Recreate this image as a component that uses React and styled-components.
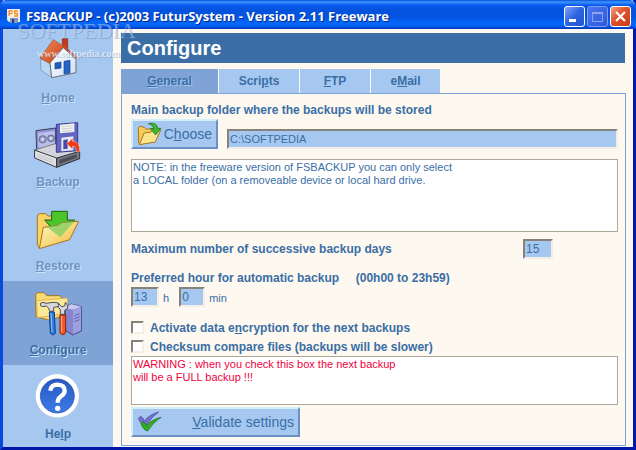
import { useState } from "react";
import styled, { createGlobalStyle } from "styled-components";

const ink = "#3a6ea5";
const light = "#a6c8f0";
const mid = "#7ea3d4";
const paper = "#fdf8f0";

const GlobalStyle = createGlobalStyle`
    * { box-sizing: border-box; }
    body {
        margin: 0;
        color: ${ink};
        font: 11px/13px "Liberation Sans", Arial, sans-serif;
    }
    input, button, textarea { font: inherit; color: inherit; }
`

let Window = styled.div`
    position: relative;
    display: flex;
    flex-direction: column;
    min-height: 100vh;
    border: solid;
    border-width: 0 3px 3px;
    border-color: #0a48e0 #0018b0 #0018a8 #0a48e0;
    background: ${paper};
`

let TitleBar = styled.header`
    display: flex;
    align-items: center;
    gap: 6px;
    height: 29px;
    margin: 0 -3px;
    padding: 3px 5px 0 7px;
    border-radius: 6px 6px 0 0;
    background: linear-gradient(#0a50d8 0, #3c95ff 2px, #0a5cf0 5px, #0452dc 10px, #0355e4 18px, #0468fc 23px, #0460f4 26px, #0138b8 29px);
`

let Title = styled.h1`
    flex: 1;
    margin: 0;
    color: white;
    font: bold 13px/14px "Open Sans", "Noto Sans", sans-serif;
    text-shadow: 1px 1px 0 #062a88;
    white-space: nowrap;
`

let Controls = styled.div`
    display: flex;
    gap: 2px;
`

let WinBtn = styled.button`
    display: block;
    width: 21px;
    height: 21px;
    padding: 0;
    border: 1px solid ${props => props.$dim ? '#7d9cf0' : 'white'};
    border-radius: 3px;
    background: ${props => props.$bg};

    svg { display: block; }
`

let Body = styled.div`
    flex: 1;
    display: flex;
`

let Sidebar = styled.nav`
    flex: none;
    width: 110px;
    background: ${light};
`

let NavBtn = styled.button`
    display: flex;
    flex-direction: column;
    align-items: center;
    width: 100%;
    height: ${props => props.$last ? '82px' : '84px'};
    padding: 8px 0 0;
    border: 0;
    background: ${props => props.$active ? mid : 'transparent'};
    color: ${props => props.$dim ? '#6e93c1' : ink};
    font-weight: bold;
    font-size: 12px;
    line-height: 26px;
    text-shadow: ${props => props.$dim || props.$active ? '1px 1px 0 #cfe3fb' : 'none'};

    svg { flex: none; }
`

let Main = styled.main`
    flex: 1;
    min-width: 0;
    display: flex;
    flex-direction: column;
    padding: 4px 7px 1px 8px;
`

let Heading = styled.h2`
    margin: 0 1px 6px 0;
    padding-left: 6px;
    background: #3a6ea5;
    color: white;
    font-size: 20px;
    line-height: 30px;
`

let Tabs = styled.div`
    display: flex;
    gap: 1px;
`

let Tab = styled.button`
    width: ${props => props.$width};
    height: 24px;
    padding: 0;
    border: 0;
    background: ${props => props.$active ? mid : light};
    font-weight: bold;
    font-size: 12px;
    text-shadow: ${props => props.$active ? '1px 1px 0 #a6c8f0' : 'none'};
`

let Panel = styled.section`
    flex: 1;
    display: flex;
    flex-direction: column;
    padding: 7px 7px 8px 9px;
    border: 1px solid ${mid};
`

let Label = styled.label`
    font-weight: bold;
    font-size: 12px;
    line-height: 18px;
    white-space: pre;
`

let Row = styled.div`
    display: flex;
    align-items: ${props => props.$align || 'center'};
    gap: ${props => props.$gap || '4px'};
`

let DaysRow = styled(Row)`
    justify-content: space-between;
    margin: 7px 65px 10px 0;
`

let Field = styled.input`
    flex: 1;
    min-width: 0;
    height: 20px;
    padding: 0 1px;
    border: 2px solid;
    border-color: #85827a #f4efe6 #f4efe6 #85827a;
    border-radius: 0;
    background: ${light};
`

let NumberField = styled(Field)`
    flex: none;
    width: ${props => props.$width};
    font-size: 12px;
`

let HourUnit = styled.label`
    padding: 3px 6px 0 0;
`

let Note = styled.textarea`
    display: block;
    width: 100%;
    height: ${props => props.$height};
    margin: ${props => props.$margin || '0'};
    padding: 1px;
    border: 1px solid #aca899;
    border-radius: 0;
    outline: none;
    resize: none;
    background: white;
    color: ${props => props.$warn ? '#f00040' : ink};
`

let BigBtn = styled.button`
    display: flex;
    align-items: center;
    justify-content: space-between;
    align-self: flex-start;
    width: ${props => props.$width};
    height: 30px;
    padding: 0 4px;
    border: 2px solid;
    border-color: #d3f0fa #6c8fc4 #6c8fc4 #d3f0fa;
    background: ${light};
    font-size: 14px;
`

let Checks = styled.div`
    margin-top: 11px;
`

let CheckRow = styled(Row)`
    height: 19px;
`

let Tick = styled.input`
    appearance: none;
    width: 13px;
    height: 13px;
    margin: 0;
    border: 2px solid;
    border-color: #85827a #f4efe6 #f4efe6 #85827a;
    background: white;

    &:checked { background: ${ink}; }
`

let Watermark = styled.div`
    position: absolute;
    top: 21px;
    left: 14px;
    display: flex;
    flex-direction: column;
    color: #d0dcf070;
    font: 22px/20px "Liberation Serif", serif;
    text-shadow: 1px 1px 0 #5a7ab060;
    pointer-events: none;

    small {
        padding: 7px 0 0 20px;
        font: bold 10px/12px "Liberation Serif", serif;
        color: #ffffffa0;
    }
`

function AppLogo() {
    return (
        <svg width="13" height="15" viewBox="0 0 13 15">
            <path d="M0 0H13V13H2L0 11Z" fill="#e6ecf5" />
            <rect x="1" y="1" width="11" height="7" fill="#fff6e6" />
            <path d="M6 2H2V7M2 4.500H5.500M11 2H7.500V4.500H10.500V7H7" fill="none" stroke="#f28b30" strokeWidth="1.300" />
            <rect x="3" y="9" width="8" height="5" fill="#8895ae" />
            <rect x="5" y="10" width="2" height="4" fill="#1f3f91" />
        </svg>
    )
}

function HomeIcon() {
    return (
        <svg width="48" height="48" viewBox="102 111 144 144">
            <defs>
                <linearGradient id="roof" x1="0" y1="0" x2="1" y2="1">
                    <stop offset="0" stopColor="#f0905c" />
                    <stop offset="1" stopColor="#cc3c14" />
                </linearGradient>
                <linearGradient id="wall" x1="0" y1="0" x2="1" y2="1">
                    <stop offset="0" stopColor="#ffffff" />
                    <stop offset="1" stopColor="#cfe0f2" />
                </linearGradient>
            </defs>
            <path d="M187 116H203V152L187 142Z" fill="#c8391a" stroke="#8a2410" strokeWidth="2" />
            <path d="M121 176L150 188L155 233L123 211Z" fill="#b9d6f2" stroke="#6a86a8" strokeWidth="2" />
            <path d="M150 188L190 143L228 178V218L155 233Z" fill="url(#wall)" stroke="#66707e" strokeWidth="3" />
            <path d="M160 119L191 139L148 190L120 174Z" fill="url(#roof)" stroke="#b04a28" strokeWidth="2" />
            <path d="M191 139L233 176" stroke="#cc4a22" strokeWidth="5" />
            <path d="M165 189L183 186V204L165 207Z" fill="#1f5fbd" stroke="#103f90" strokeWidth="2" />
            <path d="M192 184L210 181V219L192 222Z" fill="#2864c8" stroke="#103f90" strokeWidth="2" />
        </svg>
    )
}

function BackupIcon() {
    return (
        <svg width="48" height="48" viewBox="102 63 144 144">
            <path d="M108 92L167 84V148L110 152Z" fill="#8f93d8" stroke="#3a3c58" strokeWidth="3" />
            <path d="M114 99L164 93V137L116 144Z" fill="#bcc0e8" />
            <circle cx="128" cy="118" r="11" fill="#9a9fc8" stroke="#666a94" strokeWidth="3" />
            <circle cx="153" cy="115" r="10" fill="#9a9fc8" stroke="#666a94" strokeWidth="3" />
            <circle cx="128" cy="118" r="4" fill="#e4e6f5" />
            <circle cx="153" cy="115" r="4" fill="#e4e6f5" />
            <path d="M103 150L167 131L239 155L170 178Z" fill="#d4d5dc" stroke="#55575f" strokeWidth="2" />
            <path d="M103 150L170 174V202L104 174Z" fill="#dfe0e4" stroke="#3a3a40" strokeWidth="3" />
            <path d="M170 174L239 154V176L170 202Z" fill="#777982" stroke="#303036" strokeWidth="3" />
            <path d="M112 163L160 181M112 170L160 188" stroke="#b4b5bc" strokeWidth="2" />
            <path d="M178 180L230 163V173L178 192Z" fill="#4c4d56" />
            <path d="M169 73L233 68V152L169 157Z" fill="#6366c4" stroke="#3a3c88" strokeWidth="3" />
            <path d="M180 74L223 70V96L180 100Z" fill="#f1f2f0" />
            <path d="M185 80L218 77M185 87L218 84M185 94L218 91" stroke="#b9bccb" strokeWidth="2" />
            <path d="M184 113L220 109V151L184 154Z" fill="#e6e8f4" />
            <path d="M190 120L203 118V146L190 148Z" fill="#4649a8" />
            <path d="M200 131L218 115V124Q241 124 239 155H229Q230 139 218 138V148Z" fill="#f53a12" stroke="#fff" strokeWidth="1" />
        </svg>
    )
}

function RestoreIcon() {
    return (
        <svg width="48" height="48" viewBox="102 15 144 144">
            <defs>
                <linearGradient id="folder" x1="0" y1="0" x2="1" y2="1">
                    <stop offset="0" stopColor="#fffbc0" />
                    <stop offset="1" stopColor="#f0b83a" />
                </linearGradient>
            </defs>
            <path d="M112 48Q114 41 122 41H137L144 48H200V75L118 144L112 134Z" fill="#f8d468" stroke="#a8741c" strokeWidth="3" />
            <path d="M155 34H202V60H224L181 112L134 60H155Z" fill="#4cc42c" stroke="#1c6414" strokeWidth="3" />
            <path d="M130 82L173 77L186 68L236 64L209 119L118 146Z" fill="url(#folder)" stroke="#a8741c" strokeWidth="3" />
            <path d="M139 80L173 77L186 68L222 65L181 112Z" fill="#7fcf62" opacity=".75" />
        </svg>
    )
}

function ConfigureIcon() {
    return (
        <svg width="48" height="48" viewBox="102 27 144 144">
            <path d="M107 44Q108 38 114 38H132L140 47H180L186 55V108L150 121L108 110Z" fill="#f9da72" stroke="#a8741c" strokeWidth="3" />
            <path d="M110 62L202 54V100L112 113Z" fill="#fce996" stroke="#d3a240" strokeWidth="2" />
            <path d="M196 84L214 72L244 80V153L218 165L196 150Z" fill="#8386ca" stroke="#45478a" strokeWidth="3" />
            <path d="M196 84L214 72L244 80L219 89Z" fill="#c8caf0" />
            <path d="M219 89L243 81V151L219 163Z" fill="#9da0de" />
            <path d="M223 107L239 101M223 116L239 110M223 125L239 119" stroke="#5d60ae" strokeWidth="3" />
            <path d="M121 70Q120 80 128 80L139 78Q148 83 149 94H161V82Q178 78 180 84L176 69Q164 66 151 68L139 70L129 67Z" fill="#d6d8dc" stroke="#4c4e56" strokeWidth="3" />
            <path d="M148 96H163L166 160Q157 169 151 160Z" fill="#277de2" stroke="#123c86" strokeWidth="3" />
            <path d="M153 99L156 157" stroke="#8cc6fa" strokeWidth="3" />
            <path d="M181 103V88Q172 84 176 71L185 80L194 78L196 67Q207 76 202 86L194 91V103Z" fill="#d6d8dc" stroke="#4c4e56" strokeWidth="3" />
            <path d="M180 105H197V159Q188 169 180 159Z" fill="#f0562a" stroke="#8a2410" strokeWidth="3" />
            <path d="M185 108V156" stroke="#ffb088" strokeWidth="3" />
        </svg>
    )
}

function HelpIcon() {
    return (
        <svg width="48" height="48" viewBox="102 279 144 144">
            <defs>
                <linearGradient id="ball" x1="0" y1="0" x2="0" y2="1">
                    <stop offset="0" stopColor="#2858c4" />
                    <stop offset="1" stopColor="#3c7be4" />
                </linearGradient>
            </defs>
            <circle cx="173" cy="350" r="66" fill="#b9cbe4" />
            <circle cx="172" cy="347" r="65" fill="#fff" />
            <circle cx="172" cy="348" r="51" fill="url(#ball)" stroke="#1e4cae" strokeWidth="2" />
            <path d="M151 332Q153 314 173 314Q194 315 194 332Q194 341 184 348Q173 355 173 368" fill="none" stroke="#fff" strokeWidth="13" />
            <circle cx="173" cy="385" r="8" fill="#fff" />
        </svg>
    )
}

function ChooseIcon() {
    return (
        <svg width="26" height="26" viewBox="50 76 78 78">
            <path d="M54 97L58 92L72 95L77 101L105 98V112L62 147L55 142Z" fill="#f7cd58" stroke="#a8741c" strokeWidth="3" />
            <path d="M71 112L92 109L99 102L121 103L105 139L57 147Z" fill="#fbe58c" stroke="#a8741c" strokeWidth="3" />
            <path d="M84 84Q110 78 112 98H122L106 118L90 99H100Q99 88 84 84Z" fill="#3cb830" stroke="#1c6414" strokeWidth="2" />
        </svg>
    )
}

function ValidateIcon() {
    return (
        <svg width="26" height="26" viewBox="50 178 78 78">
            <path d="M54 206L61 200Q68 203 72 214Q88 194 115 187Q95 200 78 227Q62 227 54 206Z" fill="#7472cc" stroke="#3c3a94" strokeWidth="2" />
            <path d="M62 222L68 216Q75 219 79 228Q94 210 122 203Q100 216 82 244Q68 240 62 222Z" fill="#2fae22" stroke="#146010" strokeWidth="2" />
        </svg>
    )
}

const navItems = [
    { id: "home", icon: <HomeIcon />, text: <span><u>H</u>ome</span>, dim: true },
    { id: "backup", icon: <BackupIcon />, text: <span><u>B</u>ackup</span>, dim: true },
    { id: "restore", icon: <RestoreIcon />, text: <span><u>R</u>estore</span>, dim: true },
    { id: "configure", icon: <ConfigureIcon />, text: <span><u>C</u>onfigure</span> },
    { id: "help", icon: <HelpIcon />, text: <span>He<u>l</u>p</span> },
]

const tabItems = [
    { width: "97px", text: <span><u>G</u>eneral</span> },
    { width: "80px", text: <span>Scri<u>p</u>ts</span> },
    { width: "70px", text: <span><u>F</u>TP</span> },
    { width: "69px", text: <span>e<u>M</u>ail</span> },
]

function App() {

    let [page, setPage] = useState("configure");
    let [tab, setTab] = useState(0);

    return (
        <Window>
            <GlobalStyle />
            <TitleBar>
                <AppLogo />
                <Title>FSBACKUP - (c)2003 FuturSystem - Version 2.11 Freeware</Title>
                <Controls>
                    <WinBtn aria-label="Minimize" $bg="linear-gradient(135deg, #7ea6f6, #2c62e2 50%, #2456d0)">
                        <svg width="19" height="19"><rect x="4" y="12" width="7" height="3" fill="#fff" /></svg>
                    </WinBtn>
                    <WinBtn aria-label="Maximize" disabled $dim $bg="linear-gradient(135deg, #4a76ec, #2a5ae0)">
                        <svg width="19" height="19"><path d="M4.500 5V14.500H14.500V5M4 5.500H15M4 6.500H15" fill="none" stroke="#8fa4ec" /></svg>
                    </WinBtn>
                    <WinBtn aria-label="Close" $bg="linear-gradient(135deg, #f0a080, #e0502c 45%, #c83c10)">
                        <svg width="19" height="19"><path d="M5 5L14 14M14 5L5 14" stroke="#fff" strokeWidth="2.200" /></svg>
                    </WinBtn>
                </Controls>
            </TitleBar>

            <Body>
                <Sidebar>
                    {navItems.map((item, i) => (
                        <NavBtn key={item.id} $dim={item.dim} $active={page == item.id} $last={i == navItems.length - 1} onClick={() => { setPage(item.id) }}>
                            {item.icon}
                            {item.text}
                        </NavBtn>
                    ))}
                </Sidebar>

                <Main>
                    <Heading>Configure</Heading>
                    <Tabs role="tablist">
                        {tabItems.map((item, i) => (
                            <Tab key={i} role="tab" aria-selected={tab == i} $width={item.width} $active={tab == i} onClick={() => { setTab(i) }}>
                                {item.text}
                            </Tab>
                        ))}
                    </Tabs>
                    <General />
                </Main>
            </Body>

            <Watermark aria-hidden="true">
                SOFTPEDIA
                <small>www.softpedia.com</small>
            </Watermark>
        </Window>
    )
}

function General() {

    let [crypt, setCrypt] = useState(false);
    let [checksum, setChecksum] = useState(false);

    return (
        <Panel>
            <Label htmlFor="folder-path">Main backup folder where the backups will be stored</Label>
            <Row $gap="9px" $align="flex-end">
                <BigBtn $width="87px"><ChooseIcon /><span>C<u>h</u>oose</span></BigBtn>
                <Field id="folder-path" defaultValue="C:\SOFTPEDIA" />
            </Row>
            <Note
                aria-label="Note"
                readOnly
                $height="73px"
                $margin="10px 0 0"
                value={"NOTE: in the freeware version of FSBACKUP you can only select\na LOCAL folder (on a removeable device or local hard drive."}
            />

            <DaysRow>
                <Label htmlFor="days">Maximum number of successive backup days</Label>
                <NumberField id="days" $width="30px" defaultValue="15" />
            </DaysRow>

            <Label htmlFor="hour">Preferred hour for automatic backup     (00h00 to 23h59)</Label>
            <Row>
                <NumberField id="hour" $width="28px" defaultValue="13" />
                <HourUnit htmlFor="hour">h</HourUnit>
                <NumberField id="minute" $width="26px" defaultValue="0" />
                <HourUnit htmlFor="minute">min</HourUnit>
            </Row>

            <Checks>
                <CheckRow $gap="6px">
                    <Tick id="crypt" type="checkbox" checked={crypt} onChange={() => { setCrypt(!crypt) }} />
                    <Label htmlFor="crypt">Activate data e<u>n</u>cryption for the next backups</Label>
                </CheckRow>
                <CheckRow $gap="6px">
                    <Tick id="checksum" type="checkbox" checked={checksum} onChange={() => { setChecksum(!checksum) }} />
                    <Label htmlFor="checksum">Checksum compare files (backups will be slower)</Label>
                </CheckRow>
            </Checks>
            <Note
                aria-label="Warning"
                readOnly
                $warn
                $height="49px"
                $margin="0 0 2px"
                value={"WARNING : when you check this box the next backup\nwill be a FULL backup !!!"}
            />
            <BigBtn $width="169px"><ValidateIcon /><span><u>V</u>alidate settings</span></BigBtn>
        </Panel>
    )
}

export default App;
